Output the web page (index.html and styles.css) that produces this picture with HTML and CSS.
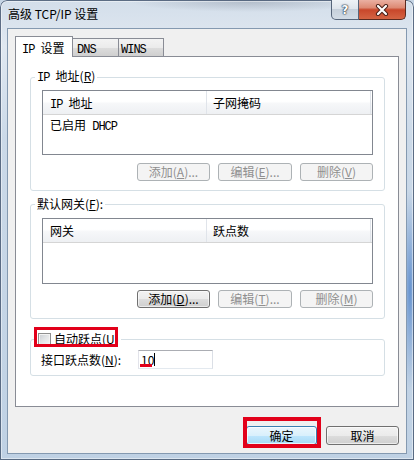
FILE: index.html
```html
<!DOCTYPE html>
<html lang="zh-CN">
<head>
<meta charset="utf-8">
<title>高级 TCP/IP 设置</title>
<link rel="stylesheet" href="styles.css">
</head>
<body>
<div class="window">
  <div class="titlebar">
    <div class="title">高级 TCP/IP 设置</div>
    <div class="caption">
      <div class="cap help">?</div>
      <div class="cap close">
        <svg width="14" height="12" viewBox="0 0 14 12">
          <path d="M3 2 L11 10 M11 2 L3 10" stroke="#4a2018" stroke-width="4.2" stroke-linecap="round" fill="none"/>
          <path d="M3 2 L11 10 M11 2 L3 10" stroke="#ffffff" stroke-width="2.2" stroke-linecap="round" fill="none"/>
        </svg>
      </div>
    </div>
  </div>
  <div class="client">
    <div class="tabs">
      <div class="tab active"><span class="lat">IP&nbsp;</span>设置</div>
      <div class="tab t-dns"><span class="lat">DNS</span></div>
      <div class="tab t-wins"><span class="lat">WINS</span></div>
    </div>
    <div class="panel">
      <fieldset class="group g-ip">
        <legend><span class="lat">IP&nbsp;</span>地址(<u>R</u>)</legend>
        <div class="gbody">
          <div class="list l-ip">
            <div class="lhead"><div class="c1"><span class="lat">IP&nbsp;</span>地址</div><div class="c2">子网掩码</div></div>
            <div class="lrow">已启用<span class="lat">&nbsp;DHCP</span></div>
          </div>
          <div class="btnrow">
            <button class="btn w73" disabled>添加(<u>A</u>)...</button>
            <button class="btn w74" disabled>编辑(<u>E</u>)...</button>
            <button class="btn w73" disabled>删除(<u>V</u>)</button>
          </div>
        </div>
      </fieldset>
      <fieldset class="group g-gw">
        <legend>默认网关(<u>F</u>):</legend>
        <div class="gbody">
          <div class="list l-gw">
            <div class="lhead"><div class="c1">网关</div><div class="c2">跃点数</div></div>
          </div>
          <div class="btnrow">
            <button class="btn w73">添加(<u>D</u>)...</button>
            <button class="btn w74" disabled>编辑(<u>T</u>)...</button>
            <button class="btn w73" disabled>删除(<u>M</u>)</button>
          </div>
        </div>
      </fieldset>
      <fieldset class="group g-metric">
        <legend><span class="cb"></span>自动跃点(<u>U</u>)</legend>
        <div class="gbody">
          <div class="metric-row">
            <span class="mlabel">接口跃点数(<u>N</u>):</span>
            <div class="field">10<span class="caret"></span></div>
          </div>
        </div>
      </fieldset>
    </div>
    <div class="footer">
      <button class="btn default w71">确定</button>
      <button class="btn w73">取消</button>
    </div>
  </div>
  <div class="mark mark-cb"></div>
  <div class="mark mark-ul"></div>
  <div class="mark mark-ok"></div>
</div>
</body>
</html>
```
FILE: styles.css
```css
* { box-sizing: border-box; }
html, body { margin: 0; padding: 0; }
body {
  width: 414px;
  height: 460px;
  overflow: hidden;
  background: #c6d5e5;
  font-family: "Noto Sans CJK SC", "Noto Sans", sans-serif;
  font-size: 12px;
  color: #000;
}
u { text-decoration: underline; text-underline-offset: 1px; }
.lat {
  font-family: "Liberation Mono", "DejaVu Sans Mono", monospace;
  letter-spacing: -1px;
}

.window {
  position: relative;
  width: 414px;
  height: 460px;
  display: flex;
  flex-direction: column;
  border-radius: 7px 7px 0 0;
  background:
    radial-gradient(ellipse 9px 100px at 410px 290px, rgba(70,125,200,0.75), rgba(70,125,200,0)),
    radial-gradient(ellipse 120px 10px at 250px 2px, rgba(120,130,145,0.35), rgba(120,130,145,0)),
    linear-gradient(180deg, #d3deea 0%, #e0e8f1 10%, #cbd9e8 30%, #bfd1e4 100%);
  box-shadow: inset 0 0 0 1px rgba(45,65,95,0.75), inset 0 0 0 2px rgba(255,255,255,0.45);
}

/* title bar */
.titlebar {
  height: 28px;
  display: flex;
  align-items: flex-start;
}
.title {
  padding: 6px 0 0 8px;
  line-height: 16px;
  font-size: 12px;
}
.caption {
  margin-left: auto;
  margin-right: 8px;
  display: flex;
}
.cap {
  height: 20px;
  display: flex;
  align-items: center;
  justify-content: center;
}
.help {
  width: 28px;
  border: 1px solid #56657a;
  border-top: none;
  border-radius: 0 0 0 5px;
  background: linear-gradient(180deg, #eef2f6 0%, #dfe5ec 45%, #c6d0db 50%, #d3dce6 100%);
  font-family: "DejaVu Sans", sans-serif;
  font-weight: bold;
  font-size: 12px;
  color: #fff;
  text-shadow: 0 0 1px #26313f, 0 0 1px #26313f, 0 0 2px #26313f;
}
.close {
  width: 47px;
  border: 1px solid #5b2a1f;
  border-left: none;
  border-top: none;
  border-radius: 0 0 5px 0;
  background: linear-gradient(180deg, #eab0a2 0%, #dd8a74 40%, #c8472b 52%, #d46443 100%);
}

/* client */
.client {
  flex: 1;
  margin: 0 7px 6px;
  background: #f0f0f0;
  border: 1px solid #8499b0;
  display: flex;
  flex-direction: column;
}
.tabs {
  display: flex;
  align-items: flex-end;
  padding: 7px 0 0 7px;
}
.tab {
  height: 18px;
  border: 1px solid #898c95;
  border-bottom: none;
  margin-left: -1px;
  line-height: 17px;
  padding-left: 3px;
  background: linear-gradient(180deg, #f3f3f3 0%, #ebebeb 50%, #dddddd 50%, #cfcfcf 100%);
}
.tab.active {
  margin-left: 0;
  position: relative;
  z-index: 1;
  width: 58px;
  height: 21px;
  margin-bottom: -1px;
  padding: 1px 0 0 6px;
  line-height: 19px;
  background: #fff;
}
.t-dns { width: 47px; padding-left: 4px; }
.t-wins { width: 46px; padding-left: 2px; }

.panel {
  margin: 0 7px;
  height: 351px;
  background: #fff;
  border: 1px solid #898c95;
  padding: 11px 0 0 14px;
  display: flex;
  flex-direction: column;
}

.group {
  margin: 0;
  padding: 0;
  min-width: 0;
  width: 355px;
  border: 1px solid #d5dfe5;
  border-radius: 3px;
}
.group legend {
  padding: 0 2px;
  margin-left: 4px;
  line-height: 16px;
}
.g-gw { margin-top: 5px; }
.g-metric { margin-top: 12px; }
.g-metric legend { margin-left: 5px; }

.g-ip .gbody { padding: 4px 11px 9px; }
.g-gw .gbody { padding: 6px 11px 10px; }
.g-metric .gbody { padding: 3px 0 6px 10px; }

.list {
  border: 1px solid #828790;
  background: #fff;
}
.l-ip { height: 65px; }
.l-gw { height: 66px; }
.lhead {
  display: flex;
  height: 24px;
  line-height: 23px;
  border-bottom: 1px solid #d5d5d5;
  background: linear-gradient(180deg, #ffffff 0%, #ffffff 45%, #f6f7f9 55%, #eef0f3 100%);
}
.lhead .c1 {
  width: 164px;
  padding-left: 7px;
  border-right: 1px solid #e0e4ea;
}
.lhead .c2 {
  flex: 1;
  padding-left: 6px;
  border-right: 1px solid #e0e4ea;
  margin-right: 1px;
}
.lrow {
  line-height: 20px;
  padding-left: 7px;
}

.btnrow {
  display: flex;
  justify-content: flex-end;
  gap: 8px;
}
.g-ip .btnrow { margin-top: 8px; }
.g-gw .btnrow { margin-top: 6px; }

.btn {
  height: 18px;
  padding: 0;
  font: inherit;
  line-height: 16px;
  color: #000;
  border: 1px solid #707070;
  border-radius: 3px;
  background: linear-gradient(180deg, #f2f2f2 0%, #ebebeb 50%, #dddddd 50%, #cfcfcf 100%);
  box-shadow: inset 0 0 0 1px rgba(255,255,255,0.6);
}
.btn:disabled {
  color: #8f8f8f;
  border-color: #adb2b5;
  background: #f4f4f4;
  box-shadow: none;
}
.btn.default {
  border-color: #3c7fb1;
  background: linear-gradient(180deg, #eaf6fd 0%, #d9f0fc 50%, #bee6fd 50%, #a7d9f5 100%);
  box-shadow: inset 0 0 0 1px rgba(255,255,255,0.7);
}
.w71 { width: 71px; }
.w73 { width: 73px; }
.w74 { width: 74px; }

.cb {
  display: inline-block;
  width: 13px;
  height: 13px;
  margin-right: 3px;
  vertical-align: -2px;
  border: 1px solid #8e8f8f;
  background: linear-gradient(135deg, #c9cdd2 0%, #e4e6e8 50%, #f6f6f6 100%);
  box-shadow: inset 0 0 0 1px #f4f4f4;
}

.metric-row {
  display: flex;
  align-items: center;
}
.mlabel { width: 97px; }
.field {
  width: 75px;
  height: 19px;
  border: 1px solid;
  border-color: #abadb3 #dbdfe6 #e3e9ef #e2e3ea;
  background: #fff;
  padding-left: 2px;
  display: flex;
  align-items: center;
  line-height: 17px;
}
.caret {
  display: inline-block;
  width: 1px;
  height: 13px;
  background: #000;
  margin-left: 0;
}

.footer {
  display: flex;
  justify-content: flex-end;
  gap: 9px;
  padding: 19px 7px 0 0;
}
.footer .btn { height: 19px; line-height: 17px; }

/* red annotation marks drawn over the dialog */
.mark { position: absolute; }
.mark-cb {
  left: 34px;
  top: 327px;
  width: 84px;
  height: 20px;
  border: 3px solid #e2001a;
}
.mark-ul {
  left: 140px;
  top: 364px;
  width: 12px;
  height: 3px;
  background: #e2001a;
}
.mark-ok {
  left: 243px;
  top: 417px;
  width: 78px;
  height: 31px;
  border: 4px solid #e2001a;
}
```
